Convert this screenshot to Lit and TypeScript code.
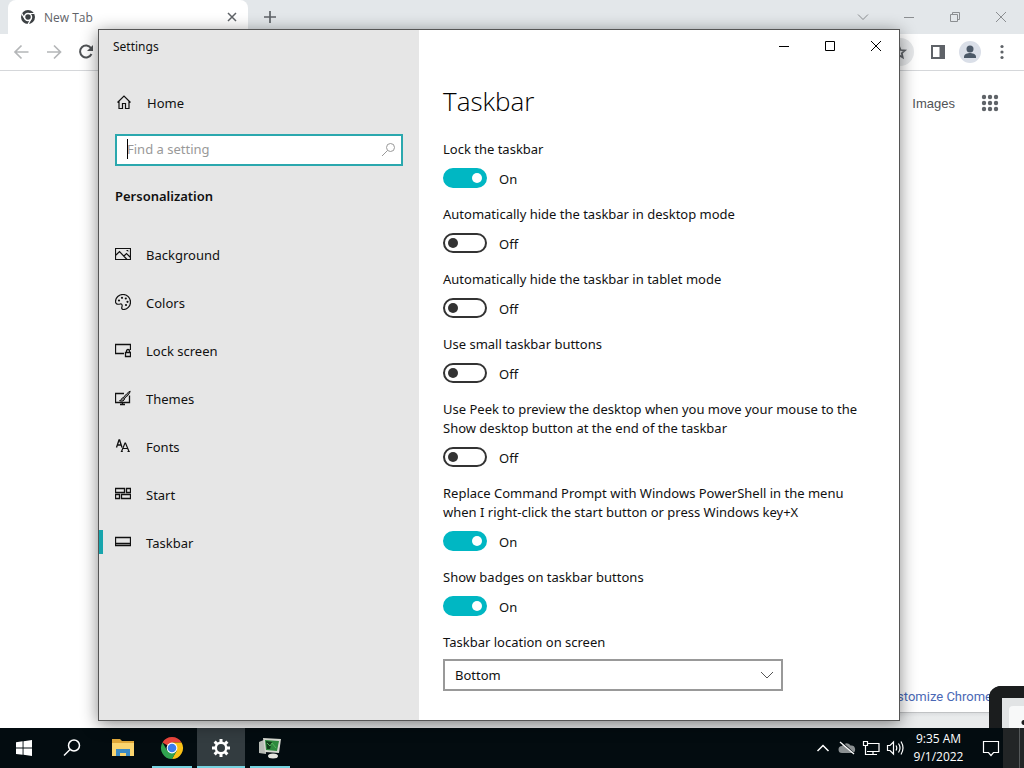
import { LitElement, html, css, svg } from "lit";
import { customElement, property } from "lit/decorators.js";
import { classMap } from "lit/directives/class-map.js";

const icon = (size: number, body: unknown) => html`
  <svg width=${size} height=${size} viewBox="0 0 ${size} ${size}" fill="none" stroke="currentColor" aria-hidden="true">${body}</svg>`;

const glyphs = {
  home: svg`<path d="M1.500 8.500 8 2l6.500 6.500M3 7v7.500h3.500V9.500h3v5H13V7" stroke-width="1.200"/>`,
  search: svg`<circle cx="9.500" cy="5.500" r="4"/><path d="M6.500 8.500 1 14"/>`,
  background: svg`<path d="M.5 2.500h15v11H.5zM.5 9.500l4-4 7.500 8M9 10l2.500-2.500 4 4" stroke-width="1.200"/><path d="M11.500 4.500h1.500v1"/>`,
  colors: svg`<path d="M8.500 15.500c-2 0-2-1.500-1.500-3 .5-1.700-.3-2.800-1.800-2.500C3 10.500.5 10.500.5 7.500.5 3.500 4 .5 8 .5s7.500 3 7.500 7.500-3.500 7.500-7 7.500z" stroke-width="1.200"/><g fill="currentColor" stroke="none"><circle cx="4" cy="6.500" r="1.100"/><circle cx="7" cy="3.800" r="1.100"/><circle cx="10.800" cy="4.500" r="1.100"/><circle cx="12.500" cy="7.800" r="1.100"/><circle cx="11" cy="11" r="1.100"/></g>`,
  lock: svg`<path d="M9 11.500H.5v-9h15V8M10.500 10.500h5v4h-5zM11.500 10.500V9a1.500 1.500 0 0 1 3 0v1.500" stroke-width="1.300"/>`,
  themes: svg`<path d="M9 3.500H.5v9h14v-7M7.500 12.500v2M5 14.500h5" stroke-width="1.300"/><path d="M15.200 1.200c-1.500.3-5.500 4.500-6.700 6.300l1 1c2-1.500 5.700-5.500 5.700-7.300zM8.500 7.800c-1.500-.2-2 .8-2.500 2.200-.3.500-1 .7-1.500.7 2.500 1 5 .3 5-2z" fill="#888"/>`,
  fonts: svg`<path d="M1.500 9.500 4 2h.6L7 9.500M2.300 7h4" stroke-width="1.300"/><path d="M6.500 13.500 10 5h.5l3.500 8.500M7.800 10.500h5M5.800 13.500h2M12.500 13.500h2.300" stroke-width="1.200"/>`,
  start: svg`<path d="M.5 2.500h9v4h-9zM11.500 2.500h4v4h-4zM.5 8.500h4v4h-4zM6.500 8.500h9v4h-9z" stroke-width="1.300"/>`,
  taskbar: svg`<path d="M.5 3.500h15v8H.5zM.5 9.500h15" stroke-width="1.300"/>`,
  chevron: svg`<path d="M2 5l6 6 6-6"/>`,
  minimize: svg`<path d="M3 8.500h10"/>`,
  maximize: svg`<path d="M3.500 3.500h9v9h-9z"/>`,
  restore: svg`<path d="M3.500 5.500h7v7h-7zM5.500 5.500v-2h7v7h-2"/>`,
  close: svg`<path d="M3 3l10 10M13 3 3 13"/>`,
};

@customElement("toggle-setting")
class ToggleSetting extends LitElement {
  @property() label = "";
  @property({ type: Boolean }) on = false;

  static styles = css`
    :host { display: block; }
    .label { display: block; line-height: 19px; margin-bottom: 9px; }
    .control { display: flex; align-items: center; gap: 12px; height: 20px; }
    .switch {
      appearance: none; box-sizing: border-box; flex: none; margin: 0;
      width: 44px; height: 20px; padding: 0 3px; border: 2px solid #333; border-radius: 10px;
      display: flex; align-items: center; background: #fff;
    }
    .switch::before { content: ""; width: 10px; height: 10px; border-radius: 50%; background: #333; }
    .switch:checked { background: #00b7c3; border-color: #00b7c3; justify-content: flex-end; }
    .switch:checked::before { background: #fff; }
    .state { line-height: 20px; padding-top: 2px; }
  `;

  render() {
    return html`
      <label class="label" for="switch">${this.label}</label>
      <div class="control">
        <input class="switch" id="switch" type="checkbox" role="switch" .checked=${this.on}
          @change=${(e: Event) => { this.on = (e.target as HTMLInputElement).checked; }}>
        <span class="state">${this.on ? "On" : "Off"}</span>
      </div>`;
  }
}

@customElement("browser-window")
class BrowserWindow extends LitElement {
  static styles = css`
    :host { display: flex; flex-direction: column; background: #fff; font-family: Roboto, sans-serif; color: #5f6368; }
    button { appearance: none; border: 0; background: none; padding: 0; margin: 0; color: inherit; font: inherit; display: grid; place-items: center; }
    svg { display: block; }
    .tabs { display: flex; align-items: center; height: 34px; background: #e3e7ea; padding-left: 8px; }
    .tab { box-sizing: border-box; width: 240px; height: 34px; background: #fff; border-radius: 8px 8px 0 0; display: flex; align-items: center; gap: 8px; padding: 0 8px 0 12px; font: 12px "Open Sans", sans-serif; }
    .name { flex: 1; }
    .new { margin-left: 14px; }
    .caption { margin-left: auto; display: flex; color: #8b8e91; }
    .caption button { width: 46px; height: 28px; }
    .toolbar { box-sizing: border-box; height: 37px; background: #fff; border-bottom: 1px solid #d5d7da; display: flex; align-items: center; gap: 12px; padding: 0 14px 0 12px; }
    .nav { display: flex; gap: 12px; color: #b4b6b8; }
    .nav .reload { color: #505356; }
    .tools { margin-left: auto; display: flex; align-items: center; gap: 12px; }
    .star { width: 28px; height: 28px; border-radius: 50%; background: #e6e8ea; margin-right: 4px; }
    .page { flex: 1; display: flex; flex-direction: column; justify-content: space-between; align-items: flex-end; padding: 22px 24px 5px; }
    .links { display: flex; align-items: center; gap: 25px; font: 13px "Liberation Sans", sans-serif; }
    .links a { color: #505356; text-decoration: none; }
    .customize { color: #4a68b5; text-decoration: none; font-size: 13px; line-height: 20px; padding-right: 8px; }
    .footer { height: 16px; background: linear-gradient(to right, #fff 10%, #e9ebec 40%); }
    .edge { margin-left: 50%; height: 4px; border-top: 1px solid #c0c2c4; background: linear-gradient(#dcdee0, #e9ebec); }
  `;

  render() {
    return html`
      <div class="tabs">
        <div class="tab">
          <svg width="16" height="16" viewBox="0 0 16 16"><circle cx="8" cy="8" r="7" fill="#3c4043"/><circle cx="8" cy="8" r="3.500" fill="#3c4043" stroke="#fff" stroke-width="1.500"/><path d="M8 4.500h6.500M5 10 1.800 4.600M11 10l-3 5.400" stroke="#fff" stroke-width="1.200"/></svg>
          <span class="name">New Tab</span>
          <button aria-label="Close tab">${icon(16, svg`<path d="M4 4l8 8M12 4l-8 8" stroke-width="1.500"/>`)}</button>
        </div>
        <button class="new" aria-label="New tab">${icon(16, svg`<path d="M8 2v12M2 8h12" stroke-width="1.700"/>`)}</button>
        <div class="caption">
          <button aria-label="Search tabs">${icon(16, svg`<path d="M3 5.500l5 5 5-5"/>`)}</button>
          <button aria-label="Minimize">${icon(16, glyphs.minimize)}</button>
          <button aria-label="Restore">${icon(16, glyphs.restore)}</button>
          <button aria-label="Close">${icon(16, glyphs.close)}</button>
        </div>
      </div>
      <div class="toolbar">
        <div class="nav">
          <button aria-label="Back">${icon(20, svg`<path d="M16.500 10H3.500M9.500 3.500 3 10l6.500 6.500" stroke-width="1.700"/>`)}</button>
          <button aria-label="Forward">${icon(20, svg`<path d="M3 10h13M10 3.500 16.500 10 10 16.500" stroke-width="1.700"/>`)}</button>
          <button class="reload" aria-label="Reload">${icon(20, svg`<path d="M15 6A6 6 0 1 0 15.500 12" stroke-width="2"/><path d="M17 3v6h-6z" fill="currentColor" stroke="none"/>`)}</button>
        </div>
        <div class="tools">
          <button class="star" aria-label="Bookmark">${icon(16, svg`<path d="M7 2l1.700 4 4.300.4-3.200 2.800 1 4.300L7 11.200l-3.800 2.300 1-4.300L1 6.400 5.300 6z" stroke-width="1.700"/>`)}</button>
          <button aria-label="Side panel">${icon(16, svg`<path d="M2 2h12v12H2z" stroke-width="2"/><path d="M10 2h4v12h-4z" fill="currentColor"/>`)}</button>
          <button aria-label="Profile"><svg width="24" height="24" viewBox="0 0 24 24"><circle cx="12" cy="12" r="11" fill="#dadfe8"/><g fill="#4c5968"><circle cx="12" cy="9" r="3.500"/><path d="M6 18v-1.500c0-2.500 4-3.500 6-3.500s6 1 6 3.500V18z"/></g></svg></button>
          <button aria-label="Menu">${icon(16, svg`<g fill="currentColor" stroke="none"><circle cx="8" cy="2.500" r="1.600"/><circle cx="8" cy="8" r="1.600"/><circle cx="8" cy="13.500" r="1.600"/></g>`)}</button>
        </div>
      </div>
      <div class="page">
        <div class="links">
          <a href="#images">Images</a>
          <button aria-label="Apps">${icon(20, svg`<g fill="#5f6368" stroke="none">${[4, 10, 16].map((y) => [4, 10, 16].map((x) => svg`<circle cx=${x} cy=${y} r="2.200"/>`))}</g>`)}</button>
        </div>
        <a class="customize" href="#customize">Customize Chrome</a>
      </div>
      <div class="footer"><div class="edge"></div></div>`;
  }
}

@customElement("settings-window")
class SettingsWindow extends LitElement {
  static styles = css`
    :host { display: grid; grid-template-columns: 320px 1fr; box-sizing: border-box; border: 1px solid #555; background: #fff; box-shadow: 0 3px 16px #0007; font: 13px "Noto Sans", sans-serif; color: #111; }
    svg { display: block; }
    .side { background: #e6e6e6; display: flex; flex-direction: column; }
    .caption { height: 34px; line-height: 34px; padding-left: 14px; font-size: 12px; }
    .home { display: flex; align-items: center; gap: 15px; margin: 18px 0 12px; padding-left: 17px; height: 40px; color: inherit; text-decoration: none; }
    .find { position: relative; margin: 0 16px; }
    .query { box-sizing: border-box; display: block; width: 100%; height: 32px; border: 2px solid #2ba8ae; background: #fff; padding: 0 32px 2px 10px; font: inherit; outline: none; border-radius: 0; }
    .query::placeholder { color: #999; opacity: 1; }
    .caret { position: absolute; left: 12px; top: 5px; width: 1px; height: 20px; background: #000; }
    .lens { position: absolute; right: 6px; top: 8px; color: #999; }
    .group { margin: 20px 16px 24px; line-height: 20px; font-weight: 600; }
    .item { display: flex; align-items: center; height: 48px; color: inherit; text-decoration: none; }
    .item svg { margin: 0 15px 0 12px; }
    .text { padding-top: 2px; }
    .bar { width: 4px; height: 24px; }
    .current .bar { background: #17a5ad; }
    .main { display: flex; flex-direction: column; }
    .controls { display: flex; justify-content: flex-end; }
    .controls button { appearance: none; border: 0; background: none; padding: 0; width: 46px; height: 32px; display: grid; place-items: center; color: #000; }
    .body { padding: 20px 24px 0; }
    .title { margin: 0 0 20px; font: 300 26px/38px "Open Sans", sans-serif; color: #000; }
    .settings { display: grid; gap: 17px; }
    .choice { max-width: 340px; }
    .choice label { display: block; line-height: 19px; margin-bottom: 7px; }
    .drop { position: relative; }
    .drop select { appearance: none; box-sizing: border-box; width: 100%; height: 32px; border: 2px solid #999; border-radius: 0; background: #fff; padding: 0 32px 0 10px; font: inherit; color: inherit; }
    .drop svg { position: absolute; right: 8px; top: 8px; color: #555; pointer-events: none; }
  `;

  private items = [
    { name: "Background", glyph: glyphs.background },
    { name: "Colors", glyph: glyphs.colors },
    { name: "Lock screen", glyph: glyphs.lock },
    { name: "Themes", glyph: glyphs.themes },
    { name: "Fonts", glyph: glyphs.fonts },
    { name: "Start", glyph: glyphs.start },
    { name: "Taskbar", glyph: glyphs.taskbar },
  ];

  private toggles = [
    { label: "Lock the taskbar", on: true },
    { label: "Automatically hide the taskbar in desktop mode", on: false },
    { label: "Automatically hide the taskbar in tablet mode", on: false },
    { label: "Use small taskbar buttons", on: false },
    { label: "Use Peek to preview the desktop when you move your mouse to the Show desktop button at the end of the taskbar", on: false },
    { label: "Replace Command Prompt with Windows PowerShell in the menu when I right-click the start button or press Windows key+X", on: true },
    { label: "Show badges on taskbar buttons", on: true },
  ];

  render() {
    return html`
      <div class="side">
        <div class="caption">Settings</div>
        <a class="home" href="#home">${icon(16, glyphs.home)}<span class="text">Home</span></a>
        <div class="find">
          <input class="query" type="text" placeholder="Find a setting" aria-label="Find a setting">
          <span class="caret"></span>
          <span class="lens">${icon(16, glyphs.search)}</span>
        </div>
        <div class="group">Personalization</div>
        <nav>
          ${this.items.map((i) => html`
            <a class=${classMap({ item: true, current: i.name === "Taskbar" })} href="#${i.name}">
              <span class="bar"></span>${icon(16, i.glyph)}<span class="text">${i.name}</span>
            </a>`)}
        </nav>
      </div>
      <div class="main">
        <div class="controls">
          <button aria-label="Minimize">${icon(16, glyphs.minimize)}</button>
          <button aria-label="Maximize">${icon(16, glyphs.maximize)}</button>
          <button aria-label="Close">${icon(16, glyphs.close)}</button>
        </div>
        <div class="body">
          <h1 class="title">Taskbar</h1>
          <div class="settings">
            ${this.toggles.map((t) => html`<toggle-setting .label=${t.label} .on=${t.on}></toggle-setting>`)}
            <div class="choice">
              <label for="location">Taskbar location on screen</label>
              <div class="drop">
                <select id="location"><option>Bottom</option><option>Left</option><option>Top</option><option>Right</option></select>
                ${icon(16, glyphs.chevron)}
              </div>
            </div>
          </div>
        </div>
      </div>`;
  }
}

@customElement("task-bar")
class TaskBar extends LitElement {
  static styles = css`
    :host { display: flex; height: 40px; background: #030c10; color: #fff; font: 12px "Open Sans", sans-serif; }
    svg { display: block; }
    button { appearance: none; box-sizing: border-box; border: 0; background: none; padding: 0; margin: 0; color: inherit; font: inherit; display: grid; place-items: center; width: 48px; height: 40px; }
    .system { display: flex; }
    .apps { display: flex; gap: 1px; margin-left: 3px; }
    .open { background: linear-gradient(#76d3e0, #76d3e0) bottom / 40px 2px no-repeat; }
    .active { background: linear-gradient(#76d3e0, #76d3e0) bottom / 48px 2px no-repeat #333c40; }
    .tray { margin-left: auto; display: flex; }
    .tray button { width: 24px; }
    .tray .clock { width: 63px; line-height: 18px; align-content: center; }
    .tray .notes { width: 33px; padding-left: 9px; }
    .tray .show { width: 21px; background: #222526; }
    .tick { width: 1px; height: 40px; background: #55595a; margin-left: 12px; }
  `;

  render() {
    return html`
      <div class="system">
        <button aria-label="Start"><svg width="16" height="16" viewBox="0 0 16 16" fill="#fff"><path d="M0 2.200 6.600 1.300v6.300H0zM7.500 1.200 16 0v7.600H7.500zM0 8.500h6.600v6.300L0 13.900zM7.500 8.500H16V16l-8.500-1.200z"/></svg></button>
        <button aria-label="Search">${icon(18, svg`<circle cx="11" cy="6.500" r="5.500" stroke-width="1.500"/><path d="M7 10.500 1 16.500" stroke-width="1.500"/>`)}</button>
      </div>
      <div class="apps">
        <button aria-label="File Explorer"><svg width="22" height="20" viewBox="0 0 22 20"><path d="M0 1h8l2 2h12v15H0z" fill="#e0a83a"/><path d="M0 5h22v13H0z" fill="#fbd56f"/><path d="M4 18v-7h14v7h-4v-3H8v3z" fill="#3c8ac4"/></svg></button>
        <button class="open" aria-label="Google Chrome"><svg width="24" height="24" viewBox="0 0 24 24"><path d="M12 12 2.470 6.500A11 11 0 0 1 21.530 6.500H12z" fill="#e8453c"/><path d="M12 12 12 6.500h9.530A11 11 0 0 1 12 23l4.700-8.300z" fill="#fbc116"/><path d="M12 12 16.700 14.700 12 23A11 11 0 0 1 2.470 6.500l4.800 8.200z" fill="#31a350"/><circle cx="12" cy="12" r="5.400" fill="#fff"/><circle cx="12" cy="12" r="4.300" fill="#3b7ded"/></svg></button>
        <button class="active" aria-label="Settings"><svg width="20" height="20" viewBox="0 0 20 20" fill="none" stroke="#fff"><circle cx="10" cy="10" r="5.200" stroke-width="2.400"/>${[0, 45, 90, 135, 180, 225, 270, 315].map((a) => svg`<path d="M10 1v3.500" stroke-width="3" transform="rotate(${a} 10 10)"/>`)}</svg></button>
        <button class="open" aria-label="Remote system"><svg width="24" height="22" viewBox="0 0 24 22"><path d="M1 5l7-3v15l-7-1z" fill="#b8bcb6"/><path d="M5 1l18 1-2 14-14-1z" fill="#d5d8d0"/><path d="M7 3l14 1-2 10-11-1z" fill="#2f8b3e"/><path d="M8 4l6 1-2 7H9z" fill="#123d1b"/><path d="M9 6l3 3 2-3 4 5" stroke="#54b35c" fill="none"/><ellipse cx="15" cy="19" rx="5" ry="2.500" fill="#e5e5df"/></svg></button>
      </div>
      <div class="tray">
        <button aria-label="Show hidden icons">${icon(16, svg`<path d="M2.500 11l5.500-5.500 5.500 5.500" stroke-width="1.500"/>`)}</button>
        <button aria-label="OneDrive">${icon(18, svg`<path d="M4 14a3.500 3.500 0 0 1 0-7 5 5 0 0 1 8.500-.5A3.800 3.800 0 0 1 14 14z" fill="#8a8f91" stroke="none"/><path d="M2.500 2l14 13" stroke="#030c10" stroke-width="1.500"/><path d="M2 3l14 12" stroke-width="1.300"/>`)}</button>
        <button aria-label="Network">${icon(18, svg`<path d="M6 4.500h11v8H5M11 12.500v3M7 15.500h8M1.500 2.500h4v4h-4zM3.500 6.500v9h4" stroke-width="1.200"/>`)}</button>
        <button aria-label="Volume">${icon(18, svg`<path d="M1.500 6.500h2.500l3.500-3.500v12L4 11.500H1.500zM10 6.500q1.500 2.500 0 5M12.500 4.500q3 4.500 0 9M15 2.500q4 6.500 0 13" stroke-width="1.200"/>`)}</button>
        <button class="clock"><span>9:35 AM</span><span>9/1/2022</span></button>
        <button class="notes" aria-label="Notifications">${icon(18, svg`<path d="M1.500 2.500h15v11h-5L9 16.500 6.500 13.500h-5z" stroke-width="1.200"/>`)}</button>
        <button class="show" aria-label="Show desktop"><span class="tick"></span></button>
      </div>`;
  }
}

@customElement("app-root")
class AppRoot extends LitElement {
  static styles = css`
    :host { display: flex; flex-direction: column; height: 100vh; position: relative; overflow: hidden; }
    .browser { flex: 1; }
    .settings { position: absolute; left: 98px; right: 124px; top: 29px; bottom: 47px; }
    .device { position: absolute; right: 0; bottom: 40px; width: 35px; height: 42px; box-sizing: border-box; border: solid #1b1d1e; border-width: 12px 0 0 13px; border-top-left-radius: 12px; background: #e2e4e5; padding: 8px 0 0 7px; }
    .screen { height: 22px; border-top-left-radius: 4px; background: radial-gradient(circle at 100% 75%, #1b1d1e 2px, #f8f9f9 3px); }
  `;

  render() {
    return html`
      <browser-window class="browser"></browser-window>
      <task-bar></task-bar>
      <div class="device"><div class="screen"></div></div>
      <settings-window class="settings"></settings-window>`;
  }
}
